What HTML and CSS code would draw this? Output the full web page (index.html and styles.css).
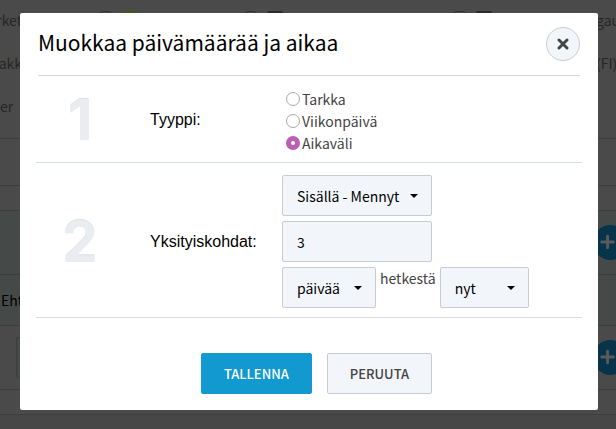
FILE: index.html
```html
<!DOCTYPE html>
<html lang="fi">
<head>
<meta charset="utf-8">
<title>Muokkaa päivämäärää ja aikaa</title>
<link rel="stylesheet" href="styles.css">
</head>
<body>
<div class="stage">
  <div class="backdrop" aria-hidden="true">
    <div class="filters">
      <div class="filter-row">
        <span class="start">rket</span>
        <span class="options">
          <span class="option"><i class="box"></i><i class="swatch green"></i></span>
          <span class="option"><i class="box"></i><i class="swatch"></i></span>
          <span class="option wide"><i class="box"></i><i class="swatch"></i></span>
        </span>
        <span class="end">gau</span>
      </div>
      <div class="filter-row"><span class="start">akk</span><span class="end">(FI)</span></div>
      <div class="filter-row"><span>er</span></div>
    </div>
    <div class="band tall"></div>
    <div class="band short"></div>
    <div class="band tinted add"><span class="plus"><svg viewBox="0 0 36 36"><path d="M9 17.500h12M15 11.500v12"/></svg></span></div>
    <div class="band tinted label">Ehto</div>
    <div class="band add"><span class="field"></span><span class="plus"><svg viewBox="0 0 36 36"><path d="M9 17.500h12M15 11.500v12"/></svg></span></div>
    <div class="band short"></div>
    <div class="band rest"></div>
  </div>

  <form class="dialog" role="dialog" aria-labelledby="title">
    <header class="head">
      <h1 id="title">Muokkaa päivämäärää ja aikaa</h1>
      <button type="button" class="close" aria-label="Sulje"><svg viewBox="0 0 12 12"><path d="M2 2l8 8M10 2l-8 8"/></svg></button>
    </header>

    <section class="step type">
      <span class="number">1</span>
      <h2 id="type">Tyyppi:</h2>
      <div class="choices" role="radiogroup" aria-labelledby="type">
        <label><input type="radio" name="type">Tarkka</label>
        <label><input type="radio" name="type">Viikonpäivä</label>
        <label><input type="radio" name="type" checked>Aikaväli</label>
      </div>
    </section>

    <section class="step details">
      <span class="number">2</span>
      <h2 id="details">Yksityiskohdat:</h2>
      <div class="fields" role="group" aria-labelledby="details">
        <span class="select range"><select aria-label="Aikaväli"><option>Sisällä - Mennyt</option></select></span>
        <input class="amount" type="text" value="3" aria-label="Määrä">
        <div class="line">
          <span class="select unit"><select aria-label="Yksikkö"><option>päivää</option></select></span>
          <label for="moment">hetkestä</label>
          <span class="select moment"><select id="moment"><option>nyt</option></select></span>
        </div>
      </div>
    </section>

    <footer class="actions">
      <button type="submit" class="button primary">TALLENNA</button>
      <button type="button" class="button">PERUUTA</button>
    </footer>
  </form>
</div>
</body>
</html>
```
FILE: styles.css
```css
* {
  box-sizing: border-box;
}

body {
  margin: 0;
  background: #484848;
  color: #444;
  font: 14px/22px "Noto Sans CJK SC", "Open Sans", sans-serif;
}

button,
input,
select {
  margin: 0;
  font: inherit;
}

.stage {
  display: grid;
  grid-template-columns: minmax(0, 1fr);
  min-height: 100vh;
  overflow: hidden;
}

.backdrop,
.dialog {
  grid-area: 1 / 1;
}

/* Dimmed page */
.backdrop {
  display: flex;
  flex-direction: column;
  background: #4a4a4a;
  color: #262626;
}

.filters {
  padding-top: 9px;
  height: 138px;
}

.filter-row {
  display: flex;
  justify-content: space-between;
  height: 43px;
}

.start {
  width: 22px;
  display: flex;
  justify-content: flex-end;
}

.end {
  flex: none;
  width: 20px;
  white-space: nowrap;
}

.options {
  display: flex;
  flex: 1;
  min-width: 0;
  padding: 2px 0 0 77px;
}

.option {
  display: flex;
  flex: none;
  gap: 10px;
  width: 145px;
}

.option.wide {
  margin-left: 64px;
}

.box {
  width: 13px;
  height: 13px;
  border: 1px solid #333;
  border-radius: 4px;
}

.swatch {
  width: 16px;
  height: 16px;
  border-radius: 2px;
  background: #2a2a2a;
}

.swatch.green {
  background: #3c5a1c;
}

.band {
  display: flex;
  align-items: center;
  height: 64px;
  border-top: 1px solid #3d3d3d;
}

.band.tall {
  height: 47px;
}

.band.short {
  height: 25px;
}

.band.tinted {
  background: #454948;
}

.band.label {
  height: 51px;
  padding-left: 1px;
  color: #000;
}

.band.rest {
  flex: 1;
  background: #474747;
}

.field {
  width: 60px;
  height: 41px;
  margin-left: 16px;
  border: 1px solid #3a3d3d;
  border-radius: 2px;
  background: #464949;
}

.plus {
  flex: none;
  width: 35px;
  height: 35px;
  margin-left: auto;
  margin-right: -12px;
  border-radius: 50%;
  background: #07344a;
}

.plus svg {
  display: block;
  fill: none;
  stroke: #5a5a5a;
  stroke-width: 3;
  stroke-linecap: round;
}

/* Dialog */
.dialog {
  position: relative;
  align-self: start;
  margin: 13px 18px 19px 20px;
  padding: 0 16px 16px;
  border-radius: 2px;
  background: #fff;
}

.head {
  display: flex;
  align-items: center;
  justify-content: space-between;
  height: 63px;
  margin: 0 2px;
  border-bottom: 1px solid #d6d6d6;
}

h1 {
  margin: 0;
  padding-bottom: 4px;
  color: #000;
  font-size: 21px;
  font-weight: 400;
  line-height: 30px;
}

.close {
  width: 34px;
  height: 34px;
  padding: 10px;
  border: 1px solid #c8cdd0;
  border-radius: 50%;
  background: #f2f6fa;
}

.close svg {
  display: block;
  width: 12px;
  height: 12px;
  fill: none;
  stroke: #444;
  stroke-width: 3;
  stroke-linecap: round;
}

.step {
  display: grid;
  grid-template-columns: 114px 132px 1fr;
  align-items: center;
  border-bottom: 1px solid #d5dfdf;
}

.type {
  height: 87px;
  padding-top: 2px;
}

.details {
  padding: 12px 0 9px;
  border-color: #dcdcdc;
}

.number {
  width: 88px;
  color: #e9edf0;
  font: bold 56px/58px Inter, "Liberation Sans", sans-serif;
  text-align: center;
  text-shadow: 0 -1px 0 #dde1e3;
}

h2 {
  margin: 0;
  color: #000;
  font: 16px/22px "Liberation Sans", Arial, sans-serif;
}

.choices {
  display: flex;
  flex-direction: column;
  padding: 2px 0 0 4px;
}

.choices label {
  display: flex;
  align-items: center;
  gap: 2px;
}

.choices input {
  appearance: none;
  width: 14px;
  height: 14px;
  border: 1px solid #a8a8a8;
  border-radius: 50%;
  background: #fff;
}

.choices input:checked {
  border: 5px solid #bb5fb2;
}

.fields {
  display: flex;
  flex-direction: column;
  align-items: flex-start;
  gap: 5px;
}

.line {
  display: flex;
  gap: 4px;
}

.select {
  position: relative;
}

.select::after {
  content: "";
  position: absolute;
  top: 19px;
  right: 14px;
  border: 4px solid transparent;
  border-top-color: #000;
  border-bottom: 0;
  pointer-events: none;
}

.select select,
.amount {
  display: block;
  appearance: none;
  width: 100%;
  height: 41px;
  padding: 0 14px;
  border: 1px solid #c8ccd0;
  border-radius: 2px;
  background: #f2f6fa;
  color: #000;
}

.range,
.amount {
  width: 150px;
}

.unit {
  width: 94px;
}

.moment {
  width: 89px;
}

.actions {
  display: flex;
  justify-content: center;
  gap: 15px;
  padding: 35px 0 0 15px;
}

.button {
  height: 41px;
  padding: 0 22px;
  border: 1px solid #c8ccd0;
  border-radius: 2px;
  background: #f2f6fa;
  color: #444;
  font-size: 13px;
  font-weight: 500;
}

.button.primary {
  border-color: #1199d0;
  background: #1199d0;
  color: #fff;
}
```
